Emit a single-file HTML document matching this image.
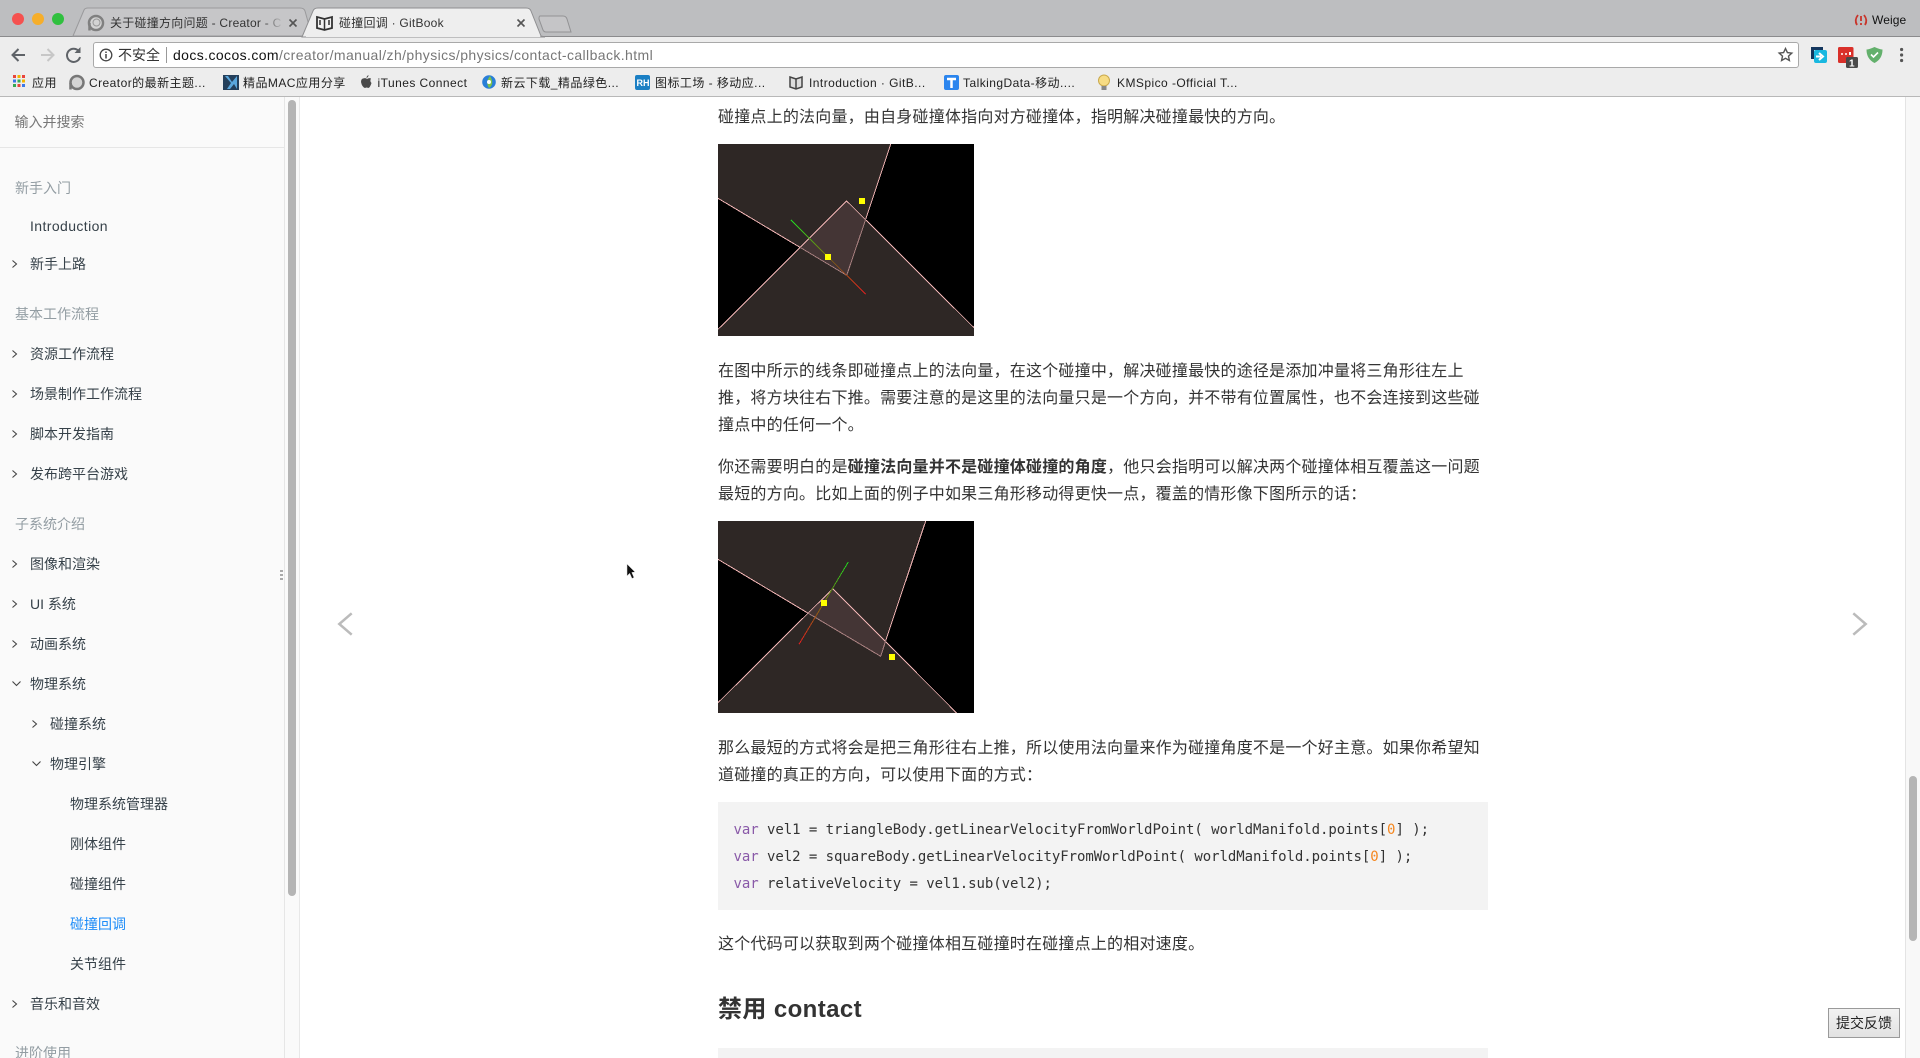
<!DOCTYPE html>
<html lang="zh"><head><meta charset="utf-8"><title>碰撞回调 · GitBook</title>
<style>
html,body{margin:0;padding:0;width:1920px;height:1058px;overflow:hidden;background:#fff}
body{position:relative;font-family:"Liberation Sans","Noto Sans CJK SC",sans-serif;color:#333}
.a{position:absolute;white-space:nowrap}
.t{position:absolute;white-space:nowrap;height:20px;line-height:20px;font-size:12px;color:#222}
.b{letter-spacing:.45px}
.s{position:absolute;white-space:nowrap;height:24px;line-height:24px;font-size:14px;color:#364149}
.h{color:#939da3}
.p{position:absolute;left:718px;white-space:nowrap;height:28px;line-height:28px;font-size:16px;letter-spacing:.21px;color:#333}
.c{position:absolute;left:733.500px;white-space:pre;height:24px;line-height:24px;font-family:"DejaVu Sans Mono","Liberation Mono",monospace;font-size:14px;letter-spacing:-.05px;color:#333}
.c i{font-style:normal;color:#8959a8}.c b{font-weight:normal;color:#f5871f}
svg{position:absolute;overflow:visible}
.l{shape-rendering:crispEdges}
</style></head><body>

<!-- Browser chrome -->
<div class="a" style="left:0;top:0;width:1920px;height:36px;background:#bdbec0"></div>
<div class="a" style="left:0;top:36px;width:1920px;height:60px;background:#ededed"></div>
<div class="a" style="left:0;top:36px;width:1920px;height:1px;background:#8b8b8d"></div>
<div class="a" style="left:0;top:96px;width:1920px;height:1px;background:#b8b8b8"></div>

<div class="a" style="left:12px;top:13px;width:12px;height:12px;border-radius:50%;background:#f5514f"></div>
<div class="a" style="left:31.500px;top:13px;width:12px;height:12px;border-radius:50%;background:#f6ae2a"></div>
<div class="a" style="left:51.500px;top:13px;width:12px;height:12px;border-radius:50%;background:#30c03f"></div>

<svg style="left:0;top:0" width="600" height="37">
<path d="M73 36 L84 10 Q85 8 88 8 L300 8 Q304 8 305 11 L312 36Z" fill="#c6c6c8" stroke="#9a9a9c"/>
<path d="M302 37 L313 11 Q314 8 318 8 L526 8 Q530 8 531 11 L541 36 L545 37Z" fill="#eeeeee" stroke="#8f8f91"/>
<path d="M540 16 H563 Q566 16 567 19 L571 32 H546 Q544 32 543 30 L539 19 Q539 16 540 16Z" fill="#c5c5c7" stroke="#929294"/>
<path d="M306 36 H540" stroke="#eeeeee" stroke-width="2"/>
<!-- favicon tab 1 -->
<circle cx="96" cy="23" r="7" fill="#d4d4d4" stroke="#808080" stroke-width="2.500"/><circle cx="96.500" cy="22.500" r="3.500" fill="none" stroke="#999" stroke-width="1"/><path d="M89.500 30.500 L89.500 23" stroke="#808080" stroke-width="2.500"/>
<!-- book tab 2 -->
<path d="M317 17 L324.500 19 L332 17 V28 L324.500 30 L317 28Z" fill="#f3f3f3" stroke="#333" stroke-width="1.800"/><path d="M324.500 19 V30 M320 20 V25 M329 20 V25" stroke="#333" stroke-width="1.500"/>
<path d="M289.500 19.500 L296.500 26.500 M296.500 19.500 L289.500 26.500 M517.500 19.500 L524.500 26.500 M524.500 19.500 L517.500 26.500" stroke="#555" stroke-width="1.600"/>
</svg>
<div class="t" style="left:110px;top:13px;width:173px;overflow:hidden;color:#333;letter-spacing:.25px;-webkit-mask-image:linear-gradient(90deg,#000 88%,transparent)">关于碰撞方向问题 - Creator - C</div>
<div class="t" style="left:339px;top:13px;color:#333;letter-spacing:.25px">碰撞回调 · GitBook</div>

<svg style="left:1853px;top:12px" width="16" height="16"><path d="M5 3 Q1 8 4 13 M11 3 Q15 8 12 13 M8 4 V9 M8 11 V13" fill="none" stroke="#c8352b" stroke-width="1.800"/></svg>
<div class="t" style="left:1872px;top:10px;color:#111;letter-spacing:.1px">Weige</div>

<!-- toolbar -->
<svg style="left:0;top:36px" width="100" height="30">
<path d="M25 19 H13 M18.500 13 L12.500 19 L18.500 25" fill="none" stroke="#5f6368" stroke-width="2"/>
<path d="M41 19 H53 M47.500 13 L53.500 19 L47.500 25" fill="none" stroke="#c7c7c7" stroke-width="2"/>
<path d="M79 15.500 A6.600 6.600 0 1 0 80 21" fill="none" stroke="#5f6368" stroke-width="2"/><path d="M80.500 11 V17 H74.500Z" fill="#5f6368"/>
</svg>
<div class="a" style="left:93px;top:42px;width:1704px;height:24px;background:#fff;border:1px solid #a9a9a9;border-radius:3px"></div>
<svg style="left:99px;top:48px" width="14" height="14"><circle cx="7" cy="7" r="5.800" fill="none" stroke="#444" stroke-width="1.300"/><path d="M7 6 V10.500 M7 3.500 V5" stroke="#444" stroke-width="1.500"/></svg>
<div class="t" style="left:118px;top:45px;font-size:14px;color:#333">不安全</div>
<div class="a" style="left:166px;top:47px;width:1px;height:16px;background:#999"></div>
<div class="t" style="left:173px;top:45px;font-size:14px;color:#777;letter-spacing:.4px"><span style="color:#111">docs.cocos.com</span>/creator/manual/zh/physics/physics/contact-callback.html</div>
<svg style="left:1778px;top:47px" width="15" height="15"><path d="M7.500 1.500 L9.400 5.600 L13.800 6.100 L10.500 9.100 L11.400 13.500 L7.500 11.300 L3.600 13.500 L4.500 9.100 L1.200 6.100 L5.600 5.600Z" fill="none" stroke="#555" stroke-width="1.400"/></svg>

<svg style="left:1810px;top:46px" width="100" height="22">
<path d="M1 1 H13 V4 H4 V13 H1Z" fill="#14375e"/><rect x="4" y="4" width="13" height="13" rx="2" fill="#19b8e0"/><path d="M6 10.500 H11 M9 7 L13 10.500 L9 14" stroke="#fff" stroke-width="2" fill="none"/>
<rect x="28" y="1" width="15.500" height="16" rx="1.500" fill="#d9302a"/><circle cx="32" cy="8" r="1" fill="#fff"/><circle cx="36" cy="8" r="1" fill="#fff"/><rect x="39" y="6" width="2" height="3" fill="#fff"/>
<rect x="36" y="11" width="12" height="11" rx="1.500" fill="#4a4a4a"/><text x="39" y="20.500" font-size="10" font-family="Liberation Sans" font-weight="bold" fill="#fff">1</text>
<path d="M64.500 1 Q59 3.500 56.500 3.500 Q56.500 13 64.500 17 Q72.500 13 72.500 3.500 Q70 3.500 64.500 1Z" fill="#63b06c"/><path d="M61 8.500 L63.500 11 L68 6.500" stroke="#fff" stroke-width="1.600" fill="none"/>
<circle cx="91.600" cy="3.500" r="1.600" fill="#555"/><circle cx="91.600" cy="9" r="1.600" fill="#555"/><circle cx="91.600" cy="14.500" r="1.600" fill="#555"/>
</svg>

<!-- bookmarks -->
<svg style="left:13px;top:75px" width="1230" height="18">
<g><rect x="0" y="0" width="3" height="3" fill="#e8453c"/><rect x="4.500" y="0" width="3" height="3" fill="#f4b400"/><rect x="9" y="0" width="3" height="3" fill="#e8453c"/><rect x="0" y="4.500" width="3" height="3" fill="#3b78e7"/><rect x="4.500" y="4.500" width="3" height="3" fill="#34a853"/><rect x="9" y="4.500" width="3" height="3" fill="#f4b400"/><rect x="0" y="9" width="3" height="3" fill="#34a853"/><rect x="4.500" y="9" width="3" height="3" fill="#e8453c"/><rect x="9" y="9" width="3" height="3" fill="#3b78e7"/></g>
<circle cx="64" cy="7.500" r="6.500" fill="#d4d4d4" stroke="#777" stroke-width="2.500"/><path d="M57.500 14.500 V8" stroke="#777" stroke-width="2.500"/>
<rect x="210" y="0" width="16" height="15" fill="#24405c"/><path d="M212 1 L218 8 L214 14 H217 L221 9 L224 14 V1 L219 7 L215 1Z" fill="#5aa7dd"/>
<path d="M350 3.500 Q353 2.500 354 4 Q356 2.500 358 3.500 Q356.500 6 358.500 8 Q357 13 355 13 Q354 12 352 13 Q349 12 348 7 Q348 4 350 3.500Z M353.500 3 Q353.500 1 355.500 0 Q355.500 2 353.500 3Z" fill="#4a4a4a"/>
<circle cx="476" cy="7" r="6.800" fill="#2a7fd8"/><path d="M477 1 Q472 7 476 13 Q482 9 477 1Z" fill="#7ec34a"/><circle cx="476" cy="7" r="2" fill="#fff"/>
<rect x="622" y="0" width="15" height="15" rx="2" fill="#1a7fc4"/><text x="623.500" y="11" font-size="9" font-family="Liberation Sans" font-weight="bold" fill="#fff">RH</text>
<path d="M777 2 L783 4 L789 2 V12 L783 14 L777 12Z" fill="#ddd" stroke="#444" stroke-width="1.500"/><path d="M783 4 V14" stroke="#444" stroke-width="1.500"/>
<rect x="931" y="0" width="15" height="15" rx="2" fill="#2b85ee"/><path d="M934 4 H943 M938.500 4 V13" stroke="#fff" stroke-width="2.500"/>
<circle cx="1091" cy="5.500" r="5.500" fill="#f7dc84" stroke="#c9a94c"/><rect x="1088.500" y="11" width="5" height="4" fill="#888"/>
</svg>
<div class="t b" style="left:32px;top:73px">应用</div>
<div class="t b" style="left:89px;top:73px">Creator的最新主题...</div>
<div class="t b" style="left:243px;top:73px">精品MAC应用分享</div>
<div class="t b" style="left:377.500px;top:73px">iTunes Connect</div>
<div class="t b" style="left:501px;top:73px">新云下载_精品绿色...</div>
<div class="t b" style="left:655px;top:73px">图标工场 - 移动应...</div>
<div class="t b" style="left:809px;top:73px">Introduction · GitB...</div>
<div class="t b" style="left:963px;top:73px">TalkingData-移动....</div>
<div class="t b" style="left:1117px;top:73px">KMSpico -Official T...</div>

<!-- Sidebar -->
<div class="a" style="left:0;top:97px;width:300px;height:961px;background:#fafafa"></div>
<div class="a" style="left:284px;top:97px;width:1px;height:961px;background:#e6e6e6"></div>
<div class="a" style="left:299px;top:97px;width:1px;height:961px;background:#e8e8e8"></div>
<div class="a" style="left:288px;top:100px;width:8px;height:796px;border-radius:4px;background:#b5b5b5"></div>
<div class="a" style="left:0;top:147px;width:284px;height:1px;background:#e6e6e6"></div>
<div class="a" style="left:280px;top:570px;width:3px;height:12px;background:repeating-linear-gradient(#aaa 0 2px,transparent 2px 4px)"></div>

<div class="s" style="left:14.500px;top:110px;color:#777">输入并搜索</div>
<div class="s h" style="left:15px;top:176px">新手入门</div>
<div class="s" style="left:30px;top:214px;letter-spacing:.4px">Introduction</div>
<div class="s" style="left:30px;top:252px">新手上路</div>
<div class="s h" style="left:15px;top:302px">基本工作流程</div>
<div class="s" style="left:30px;top:342px">资源工作流程</div>
<div class="s" style="left:30px;top:382px">场景制作工作流程</div>
<div class="s" style="left:30px;top:422px">脚本开发指南</div>
<div class="s" style="left:30px;top:462px">发布跨平台游戏</div>
<div class="s h" style="left:15px;top:512px">子系统介绍</div>
<div class="s" style="left:30px;top:552px">图像和渲染</div>
<div class="s" style="left:30px;top:592px">UI 系统</div>
<div class="s" style="left:30px;top:632px">动画系统</div>
<div class="s" style="left:30px;top:672px">物理系统</div>
<div class="s" style="left:50px;top:712px">碰撞系统</div>
<div class="s" style="left:50px;top:752px">物理引擎</div>
<div class="s" style="left:70px;top:792px">物理系统管理器</div>
<div class="s" style="left:70px;top:832px">刚体组件</div>
<div class="s" style="left:70px;top:872px">碰撞组件</div>
<div class="s" style="left:70px;top:912px;color:#1d8cf8">碰撞回调</div>
<div class="s" style="left:70px;top:952px">关节组件</div>
<div class="s" style="left:30px;top:992px">音乐和音效</div>
<div class="s h" style="left:15px;top:1041px">进阶使用</div>

<svg style="left:0;top:0" width="60" height="1058" fill="none" stroke="#444" stroke-width="1.100">
<path d="M12.500 260.500 L16.500 264 L12.500 267.500 M12.500 350.500 L16.500 354 L12.500 357.500 M12.500 390.500 L16.500 394 L12.500 397.500 M12.500 430.500 L16.500 434 L12.500 437.500 M12.500 470.500 L16.500 474 L12.500 477.500 M12.500 560.500 L16.500 564 L12.500 567.500 M12.500 600.500 L16.500 604 L12.500 607.500 M12.500 640.500 L16.500 644 L12.500 647.500 M32.500 720.500 L36.500 724 L32.500 727.500 M12.500 1000.500 L16.500 1004 L12.500 1007.500"/>
<path d="M12.500 681.500 L16.500 685.500 L20.500 681.500 M32.500 761.500 L36.500 765.500 L40.500 761.500"/>
</svg>

<!-- Content -->
<div class="p" style="top:104px">碰撞点上的法向量，由自身碰撞体指向对方碰撞体，指明解决碰撞最快的方向。</div>

<svg style="left:718px;top:144px" width="256" height="192" viewBox="0 0 256 192">
<defs><clipPath id="c1"><rect width="256" height="192"/></clipPath><linearGradient id="g1" gradientUnits="userSpaceOnUse" x1="73" y1="76" x2="147.700" y2="150.300"><stop offset="0" stop-color="#1fe01f"/><stop offset=".5" stop-color="#7a6a10"/><stop offset="1" stop-color="#e01f1f"/></linearGradient><linearGradient id="g2" gradientUnits="userSpaceOnUse" x1="130.300" y1="41" x2="81" y2="123.300"><stop offset="0" stop-color="#1fe01f"/><stop offset=".5" stop-color="#7a6a10"/><stop offset="1" stop-color="#e01f1f"/></linearGradient></defs>
<g clip-path="url(#c1)">
<rect width="256" height="192" fill="#000"/>
<path d="M0 185.300 L128.700 57 L256 183.700 V192 H0Z" fill="#2e2725"/>
<path d="M0 0 H172.700 L128.700 131.300 L0 54.300Z" fill="#2e2725"/>
<path d="M128.700 57 L82 103.300 L128.700 131.300 L147.700 75.300Z" fill="#443535"/>
<path class="l" d="M0 185.300 L128.700 57 L256 183.700" fill="none" stroke="#f0b4b4" stroke-width="1"/>
<path class="l" d="M0 54.300 L82 103.300" fill="none" stroke="#f0b4b4" stroke-width="1"/>
<path class="l" d="M82 103.300 L128.700 131.300 L147.700 75.300" fill="none" stroke="#a88080" stroke-width="1"/>
<path class="l" d="M147.700 75.300 L172.700 0" fill="none" stroke="#f0b4b4" stroke-width="1"/>
<path class="l" d="M73 76 L147.700 150.300" stroke="url(#g1)" stroke-width="1" fill="none"/>
<rect x="141" y="54" width="6" height="6" fill="#ffff00"/><rect x="107" y="110" width="6" height="6" fill="#ffff00"/>
</g></svg>

<div class="p" style="top:358px">在图中所示的线条即碰撞点上的法向量，在这个碰撞中，解决碰撞最快的途径是添加冲量将三角形往左上</div>
<div class="p" style="top:385px">推，将方块往右下推。需要注意的是这里的法向量只是一个方向，并不带有位置属性，也不会连接到这些碰</div>
<div class="p" style="top:412px">撞点中的任何一个。</div>
<div class="p" style="top:454px">你还需要明白的是<b>碰撞法向量并不是碰撞体碰撞的角度</b>，他只会指明可以解决两个碰撞体相互覆盖这一问题</div>
<div class="p" style="top:481px">最短的方向。比如上面的例子中如果三角形移动得更快一点，覆盖的情形像下图所示的话：</div>

<svg style="left:718px;top:521px" width="256" height="192" viewBox="0 0 256 192">
<defs><clipPath id="c2"><rect width="256" height="192"/></clipPath></defs>
<g clip-path="url(#c2)">
<rect width="256" height="192" fill="#000"/>
<path d="M0 181.700 L114.700 67.700 L238.700 192 H0Z" fill="#2e2725"/>
<path d="M0 0 H207.700 L162.700 135.300 L0 38.300Z" fill="#2e2725"/>
<path d="M114.700 67.700 L89.300 91.700 L162.700 135.300 L167.700 119.700Z" fill="#443535"/>
<path class="l" d="M0 181.700 L114.700 67.700 L238.700 192" fill="none" stroke="#f0b4b4" stroke-width="1"/>
<path class="l" d="M0 38.300 L89.300 91.700" fill="none" stroke="#f0b4b4" stroke-width="1"/>
<path class="l" d="M89.300 91.700 L162.700 135.300 L167.700 119.700" fill="none" stroke="#a88080" stroke-width="1"/>
<path class="l" d="M167.700 119.700 L207.700 0" fill="none" stroke="#f0b4b4" stroke-width="1"/>
<path class="l" d="M130.300 41 L81 123.300" stroke="url(#g2)" stroke-width="1" fill="none"/>
<rect x="103" y="79" width="6" height="6" fill="#ffff00"/><rect x="171" y="133" width="6" height="6" fill="#ffff00"/>
</g></svg>

<div class="p" style="top:735px">那么最短的方式将会是把三角形往右上推，所以使用法向量来作为碰撞角度不是一个好主意。如果你希望知</div>
<div class="p" style="top:762px">道碰撞的真正的方向，可以使用下面的方式：</div>

<div class="a" style="left:718px;top:802px;width:770px;height:108px;background:#f3f3f3"></div>
<div class="c" style="top:818px"><i>var</i> vel1 = triangleBody.getLinearVelocityFromWorldPoint( worldManifold.points[<b>0</b>] );</div>
<div class="c" style="top:845px"><i>var</i> vel2 = squareBody.getLinearVelocityFromWorldPoint( worldManifold.points[<b>0</b>] );</div>
<div class="c" style="top:872px"><i>var</i> relativeVelocity = vel1.sub(vel2);</div>

<div class="p" style="top:931px">这个代码可以获取到两个碰撞体相互碰撞时在碰撞点上的相对速度。</div>
<div class="a" style="left:718px;top:992px;height:36px;line-height:36px;font-size:24px;font-weight:bold;letter-spacing:.4px;color:#333">禁用 contact</div>
<div class="a" style="left:718px;top:1048px;width:770px;height:10px;background:#f3f3f3"></div>

<!-- nav arrows -->
<svg style="left:0;top:0" width="1920" height="1058">
<path d="M351.700 613.300 L339.300 624 L351.700 634.700" fill="none" stroke="#bbb" stroke-width="2.500"/>
<path d="M1853.300 613.300 L1865.700 624 L1853.300 634.700" fill="none" stroke="#bbb" stroke-width="2.500"/>
<path d="M627 564 L627 576 L629.700 573.300 L632 578.500 L634 577.500 L631.800 572.500 L635 572Z" fill="#111" stroke="#ddd" stroke-width=".5"/>
</svg>

<!-- right scrollbar -->
<div class="a" style="left:1905px;top:97px;width:15px;height:961px;background:#f8f8f8;border-left:1px solid #e4e4e4;box-sizing:border-box"></div>
<div class="a" style="left:1909px;top:776px;width:8px;height:165px;border-radius:4px;background:#b5b5b5"></div>

<!-- feedback -->
<div class="a" style="left:1828px;top:1008px;width:72px;height:30px;box-sizing:border-box;border:1px solid #9a9a9a;background:linear-gradient(#f2f2f2,#e2e2e2);text-align:center;line-height:28px;font-size:14px;color:#222">提交反馈</div>
</body></html>
